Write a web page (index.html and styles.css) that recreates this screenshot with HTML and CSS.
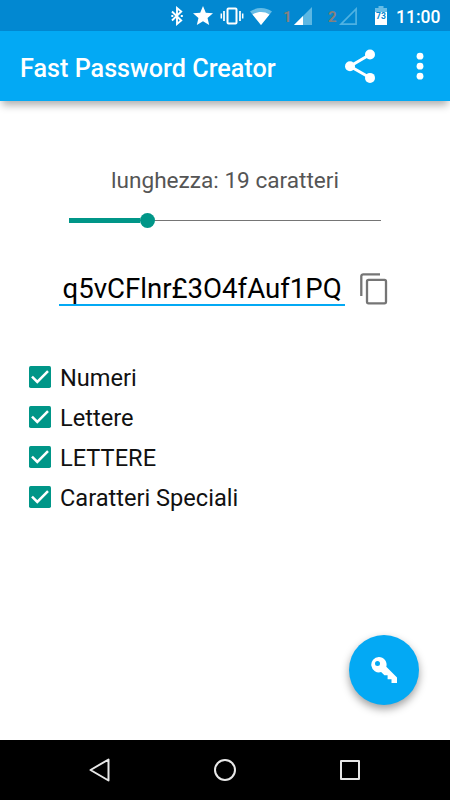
FILE: index.html
```html
<!DOCTYPE html>
<html lang="it">
<head>
<meta charset="utf-8">
<title>Fast Password Creator</title>
<link rel="stylesheet" href="styles.css">
</head>
<body>
<div class="screen">
  <div class="status">
    <svg class="bluetooth" width="14" height="20" viewBox="0 0 14 20" fill="none" stroke="#fff" stroke-width="1.900"><path d="M2 5.500l9.200 9-4.200 3.500V2l4.200 3.500-9.200 9"/><path d="M1.300 10h2M10.800 10h2"/></svg>
    <svg class="star" width="20" height="19" viewBox="2 2 20 19" fill="#fff"><path d="M12 17.270L18.180 21l-1.640-7.030L22 9.240l-7.190-.61L12 2 9.190 8.630 2 9.240l5.460 4.730L5.820 21z"/></svg>
    <svg class="vibrate" width="24" height="18" viewBox="0 0 24 18" fill="none" stroke="#fff"><rect x="7.500" y="1.500" width="9" height="15" rx="1" stroke-width="2"/><path d="M4 4v10M20 4v10" stroke-width="1.700"/><path d="M1.300 6.500v5M22.700 6.500v5" stroke-width="1.500"/></svg>
    <svg class="wifi" width="24" height="19" viewBox="0 0 24 19"><path fill="#66bce6" d="M12 18L1 4.500C4 2.200 8 1 12 1s8 1.200 11 3.500z"/><path fill="#fff" d="M12 18L3.500 7.500C6 5.800 9 5 12 5s6 .8 8.500 2.500z"/></svg>
    <span class="sim sim1">1</span>
    <svg class="signal" width="18" height="18" viewBox="0 0 18 18"><path fill="#5cb7e3" d="M0 18L18 0v18z"/><path fill="#fff" d="M0 18l9-9v9z"/></svg>
    <span class="sim sim2">2</span>
    <svg class="signal" width="18" height="18" viewBox="0 0 18 18"><path fill="none" stroke="#4fb2e2" stroke-width="1.700" d="M2 17.100L17.100 2v15.100z"/></svg>
    <div class="battery">
      <svg width="12" height="19" viewBox="0 0 12 19"><path fill="#66bce6" d="M3.500 0h5v2H12v17H0V2h3.500z"/><path fill="#fff" d="M0 6h12v13H0z"/></svg>
      <span>73</span>
    </div>
    <span class="clock">11:00</span>
  </div>
  <header class="toolbar">
    <h1>Fast Password Creator</h1>
    <svg class="share" width="32" height="36" viewBox="0 0 32 36" fill="#fff"><path d="M25 6.500L5 18.200l20 11.600" fill="none" stroke="#fff" stroke-width="3"/><circle cx="25" cy="6.500" r="5"/><circle cx="5" cy="18.200" r="5"/><circle cx="25" cy="29.900" r="5"/></svg>
    <svg class="more" width="8" height="28" viewBox="0 0 8 28" fill="#fff"><circle cx="4" cy="4.200" r="3.400"/><circle cx="4" cy="14.200" r="3.400"/><circle cx="4" cy="24.200" r="3.400"/></svg>
  </header>
  <main>
    <p class="length">lunghezza: 19 caratteri</p>
    <div class="slider"><div class="fill"></div><div class="thumb"></div><div class="rest"></div></div>
    <div class="output">
      <div class="password">q5vCFlnr£3O4fAuf1PQ</div>
      <svg width="28" height="33" viewBox="0 0 28 33" fill="none" stroke="#757575" stroke-width="2.300"><path d="M1.300 23V3.300a2 2 0 0 1 2-2H20"/><rect x="7" y="6.900" width="19" height="23.400" rx="1.500"/></svg>
    </div>
    <div class="options">
      <div class="option"><svg width="22" height="22" viewBox="0 0 22 22"><rect width="22" height="22" rx="1.700" fill="#009688"/><path d="M3 10.600l5.300 5.300L19 5.200" fill="none" stroke="#fff" stroke-width="2.500"/></svg><span>Numeri</span></div>
      <div class="option"><svg width="22" height="22" viewBox="0 0 22 22"><rect width="22" height="22" rx="1.700" fill="#009688"/><path d="M3 10.600l5.300 5.300L19 5.200" fill="none" stroke="#fff" stroke-width="2.500"/></svg><span>Lettere</span></div>
      <div class="option"><svg width="22" height="22" viewBox="0 0 22 22"><rect width="22" height="22" rx="1.700" fill="#009688"/><path d="M3 10.600l5.300 5.300L19 5.200" fill="none" stroke="#fff" stroke-width="2.500"/></svg><span>LETTERE</span></div>
      <div class="option"><svg width="22" height="22" viewBox="0 0 22 22"><rect width="22" height="22" rx="1.700" fill="#009688"/><path d="M3 10.600l5.300 5.300L19 5.200" fill="none" stroke="#fff" stroke-width="2.500"/></svg><span>Caratteri Speciali</span></div>
    </div>
    <div class="fab">
      <svg width="26" height="26" viewBox="0 0 26 26"><path fill="#fff" fill-rule="evenodd" d="M7.800 0a7.700 7.700 0 0 1 7.500 9.800L26 20.500V26h-5.500v-3.800h-3.900v-3.900h-3.200l-3.300-3.200A7.700 7.700 0 1 1 7.800 0zM6.500 4a2.500 2.500 0 1 0 0 5 2.500 2.500 0 0 0 0-5z"/></svg>
    </div>
  </main>
  <nav>
    <svg width="24" height="26" viewBox="0 0 24 26"><path d="M2.500 13L20.500 2.500v21z"/></svg>
    <svg width="24" height="26" viewBox="0 0 24 26"><circle cx="12" cy="13" r="10"/></svg>
    <svg width="24" height="26" viewBox="0 0 24 26"><rect x="3" y="4" width="18" height="18"/></svg>
  </nav>
</div>
</body>
</html>
```
FILE: styles.css
```css
* { box-sizing: border-box; }
body, h1, p { margin: 0; }
svg { display: block; flex: none; }

.screen {
  width: 450px;
  height: 800px;
  display: flex;
  flex-direction: column;
  background: #fff;
  font-family: Roboto, sans-serif;
  overflow: hidden;
}

.status {
  height: 31px;
  display: flex;
  align-items: center;
  padding-left: 170px;
  background: #0288d1;
  color: #fff;
}
.star { margin-left: 9px; }
.vibrate { margin-left: 7px; }
.wifi { margin-left: 5px; margin-top: 1px; }
.signal { margin-top: 1px; }
.sim {
  color: #85807c;
  font-size: 15px;
  font-weight: 700;
  line-height: 20px;
  margin-top: 2px;
}
.sim1 { width: 11px; margin-left: 10px; }
.sim2 { width: 11px; margin-left: 16px; }
.battery { position: relative; margin-left: 18px; }
.battery span {
  position: absolute;
  left: 0;
  top: 5px;
  width: 12px;
  text-align: center;
  color: #0288d1;
  font-size: 8.5px;
  font-weight: 700;
  line-height: 10px;
}
.clock {
  margin-left: 9px;
  margin-top: 2px;
  font-size: 17.5px;
  font-weight: 500;
  line-height: 20px;
}

.toolbar {
  position: relative;
  height: 70px;
  display: flex;
  align-items: center;
  flex: none;
  padding-left: 20px;
  background: #03a9f4;
  box-shadow: 0 6px 8px -2px rgba(0, 0, 0, .32);
}
h1 {
  width: 325px;
  color: #fff;
  font-size: 25.2px;
  font-weight: 500;
  line-height: 30px;
  padding-top: 5px;
  white-space: nowrap;
}
.more { margin-left: 39px; }

main {
  flex: 1;
  position: relative;
}
.length {
  padding-top: 66px;
  color: #555;
  font-size: 22.6px;
  line-height: 28px;
  text-align: center;
}
.slider {
  display: flex;
  align-items: center;
  height: 16px;
  margin: 17px 69px 0;
}
.fill { width: 71px; height: 5px; background: #009688; }
.thumb { width: 15px; height: 15px; border-radius: 50%; background: #009688; }
.rest { flex: 1; height: 1px; background: #757575; }

.output {
  display: flex;
  align-items: flex-end;
  margin: 43px 0 0 59px;
  gap: 15px;
}
.password {
  width: 286px;
  height: 35px;
  padding-left: 3.5px;
  border-bottom: 2px solid #03a9f4;
  font-size: 27.6px;
  line-height: 36px;
  white-space: nowrap;
}

.options { margin: 51px 0 0 29px; }
.option {
  height: 40px;
  display: flex;
  align-items: center;
  gap: 9px;
  color: #111;
  font-size: 23.6px;
  line-height: 30px;
}
.option span { padding-top: 1px; }

.fab {
  position: absolute;
  right: 31px;
  bottom: 35px;
  width: 70px;
  height: 70px;
  display: flex;
  align-items: center;
  justify-content: center;
  border-radius: 50%;
  background: #03a9f4;
  box-shadow: 0 4px 8px rgba(0, 0, 0, .38);
}

nav {
  height: 60px;
  display: flex;
  align-items: center;
  justify-content: center;
  gap: 101px;
  background: #000;
}
nav svg {
  fill: none;
  stroke: #e8e8e8;
  stroke-width: 2;
  stroke-linejoin: round;
}
```
